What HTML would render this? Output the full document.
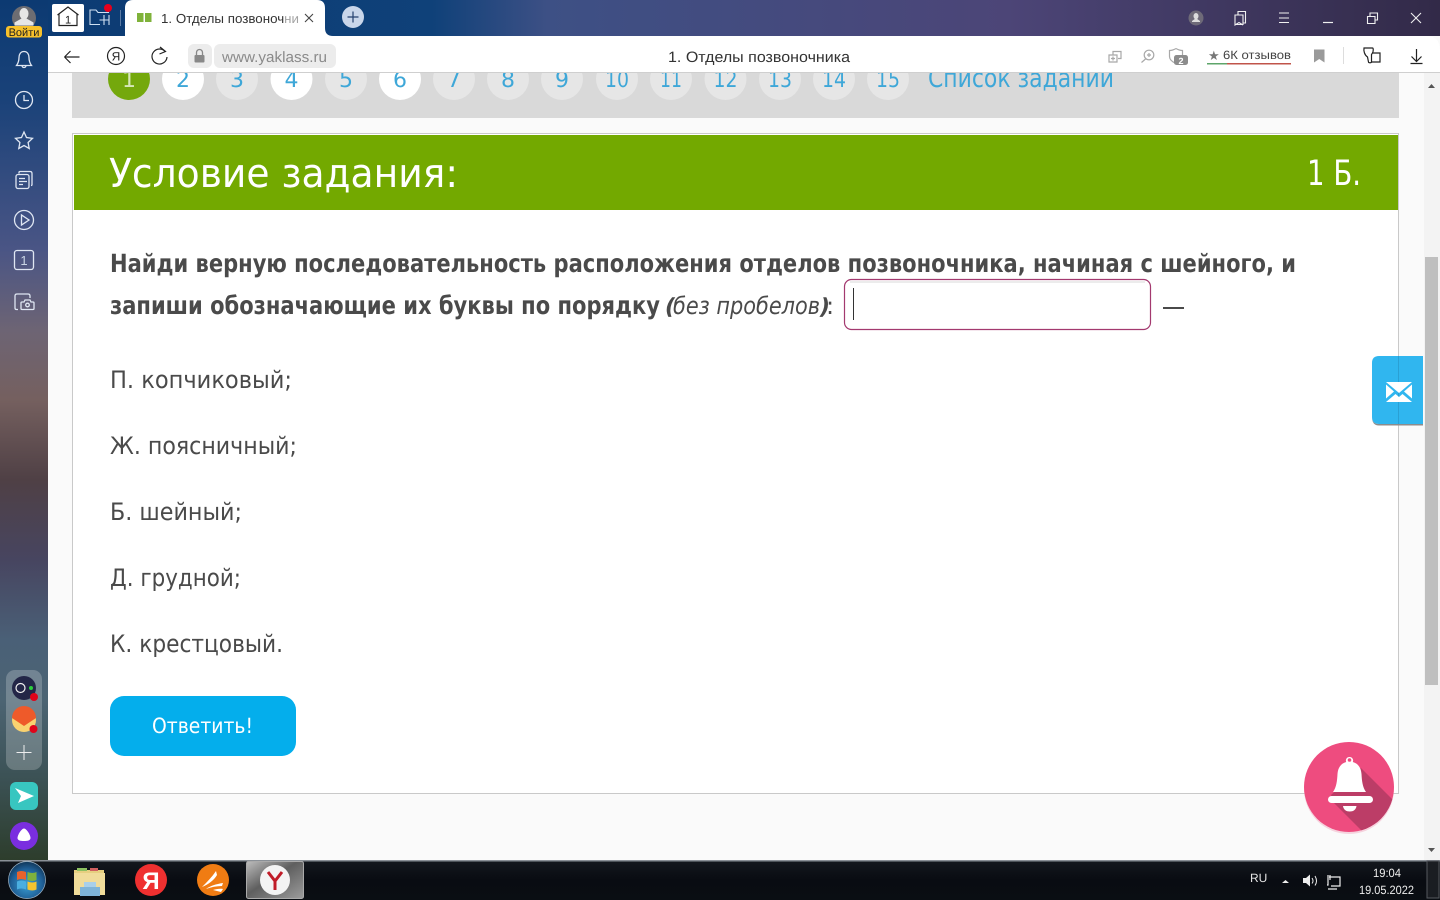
<!DOCTYPE html>
<html lang="ru"><head><meta charset="utf-8"><title>1. Отделы позвоночника</title>
<style>html,body{margin:0;padding:0;width:1440px;height:900px;overflow:hidden;background:#fff}svg{display:block}
text{font-family:"DejaVu Sans","Liberation Sans",sans-serif;text-rendering:geometricPrecision}
.l text,text.l{font-family:"Liberation Sans",sans-serif}
.ic *{fill:none;stroke:#dfe6f2;stroke-width:1.3}
.gi *{fill:none;stroke:#a8a8a8;stroke-width:1.2}
.num circle{fill:#e6e6e6}
.num text{fill:#3ea7d8;font-size:22px;text-anchor:middle}
</style></head><body>
<svg width="1440" height="900" viewBox="0 0 1440 900" xmlns="http://www.w3.org/2000/svg">
<defs>
<linearGradient id="top" x1="0" x2="1" y1="0" y2="0"><stop offset="0" stop-color="#0c3a72"/><stop offset=".3" stop-color="#0f4179"/><stop offset=".38" stop-color="#3d5085"/><stop offset=".7" stop-color="#4c4577"/><stop offset="1" stop-color="#322a48"/></linearGradient>
<linearGradient id="side" gradientUnits="userSpaceOnUse" x1="0" x2="0" y1="0" y2="860"><stop offset="0" stop-color="#0c3a72"/><stop offset=".116" stop-color="#1a4279"/><stop offset=".29" stop-color="#4a5585"/><stop offset=".384" stop-color="#6d6474"/><stop offset=".465" stop-color="#75605f"/><stop offset=".558" stop-color="#4f4045"/><stop offset=".651" stop-color="#474560"/><stop offset=".744" stop-color="#4a6077"/><stop offset=".814" stop-color="#4c6473"/><stop offset=".907" stop-color="#3b5154"/><stop offset="1" stop-color="#2d3d2c"/></linearGradient>
<linearGradient id="task" x1="0" x2="0" y1="0" y2="1"><stop offset="0" stop-color="#14181e"/><stop offset=".5" stop-color="#090c12"/><stop offset="1" stop-color="#0a0e13"/></linearGradient>
<linearGradient id="ybtn" x1="0" x2="1" y1="0" y2="1"><stop offset="0" stop-color="#bdbdbd"/><stop offset=".45" stop-color="#5f5f5f"/><stop offset="1" stop-color="#9c9c9c"/></linearGradient>
<radialGradient id="win" cx=".5" cy=".62" r=".6"><stop offset="0" stop-color="#3aa0d6"/><stop offset=".7" stop-color="#1f5f96"/><stop offset="1" stop-color="#123a5e"/></radialGradient>
<clipPath id="bell"><circle cx="1349" cy="787" r="45"/></clipPath>
</defs>

<rect width="1440" height="860" fill="url(#top)"/>
<rect x="0" y="0" width="48" height="860" fill="url(#side)"/>

<!-- content bg -->
<rect x="48" y="36" width="1392" height="824" fill="#fafafa"/>
<rect x="1424" y="72" width="16" height="788" fill="#f3f3f3"/>
<rect x="1425" y="257" width="13" height="428" fill="#bfbfbf"/>
<path d="M1428 88l3.5-4 3.500 4z" fill="#555"/><path d="M1428 848l3.500 4 3.500-4z" fill="#555"/>

<!-- gray nav -->
<rect x="72" y="60" width="1327" height="58" fill="#d9d9d9"/>
<g class="num">
<circle cx="129" cy="79" r="21" style="fill:#74a80c"/><text x="129" y="87" style="fill:#d7e8b8">1</text>
<circle cx="183" cy="79" r="21" style="fill:#fff"/><text x="183" y="87">2</text>
<circle cx="237" cy="79" r="21"/><text x="237" y="87">3</text>
<circle cx="291.500" cy="79" r="21" style="fill:#fff"/><text x="291.500" y="87">4</text>
<circle cx="346" cy="79" r="21"/><text x="346" y="87">5</text>
<circle cx="400" cy="79" r="21" style="fill:#fff"/><text x="400" y="87">6</text>
<circle cx="454" cy="79" r="21"/><text x="454" y="87">7</text>
<circle cx="508" cy="79" r="21"/><text x="508" y="87">8</text>
<circle cx="562" cy="79" r="21"/><text x="562" y="87">9</text>
<circle cx="617" cy="79" r="21"/><text x="617" y="87" textLength="24" lengthAdjust="spacingAndGlyphs">10</text>
<circle cx="671" cy="79" r="21"/><text x="671" y="87" textLength="22" lengthAdjust="spacingAndGlyphs">11</text>
<circle cx="725.500" cy="79" r="21"/><text x="725.500" y="87" textLength="24" lengthAdjust="spacingAndGlyphs">12</text>
<circle cx="780" cy="79" r="21"/><text x="780" y="87" textLength="24" lengthAdjust="spacingAndGlyphs">13</text>
<circle cx="834" cy="79" r="21"/><text x="834" y="87" textLength="24" lengthAdjust="spacingAndGlyphs">14</text>
<circle cx="888" cy="79" r="21"/><text x="888" y="87" textLength="24" lengthAdjust="spacingAndGlyphs">15</text>
</g>
<text x="928" y="87" font-size="26" fill="#3ea7d8" textLength="186" lengthAdjust="spacingAndGlyphs">Список заданий</text>

<!-- card -->
<rect x="72.500" y="133.500" width="1326" height="660" fill="#fff" stroke="#c9c9c9"/>
<rect x="74" y="135" width="1324" height="75" fill="#73a900"/>
<text x="109" y="187" font-size="40" fill="#fff" textLength="349" lengthAdjust="spacingAndGlyphs">Условие задания:</text>
<text x="1307" y="185" font-size="35" fill="#fff" textLength="54" lengthAdjust="spacingAndGlyphs">1 Б.</text>

<text x="110" y="272" font-size="25" font-weight="700" fill="#4a4a4a" textLength="1186" lengthAdjust="spacingAndGlyphs">Найди верную последовательность расположения отделов позвоночника, начиная с шейного, и</text>
<text x="110" y="314" font-size="25" font-weight="700" fill="#4a4a4a" textLength="550" lengthAdjust="spacingAndGlyphs">запиши обозначающие их буквы по порядку</text>
<text x="665" y="314" font-size="22" font-weight="700" font-style="italic" fill="#4a4a4a">(</text>
<text x="673" y="314" font-size="24" font-style="italic" fill="#4a4a4a" textLength="147" lengthAdjust="spacingAndGlyphs">без пробелов</text>
<text x="820" y="314" font-size="22" font-weight="700" font-style="italic" fill="#4a4a4a">)</text>
<text x="826" y="314" font-size="24" fill="#4a4a4a">:</text>
<rect x="844.500" y="279.500" width="306" height="50" rx="7" fill="#fff" stroke="#a3396f" stroke-width="1.200"/>
<rect x="850" y="281" width="295" height="2" fill="#ececec"/>
<rect x="853" y="288" width="1" height="32" fill="#333"/>
<rect x="1163" y="307" width="21" height="2" fill="#4a4a4a"/>

<g font-size="24" fill="#4a4a4a">
<text x="110" y="388" textLength="182" lengthAdjust="spacingAndGlyphs">П. копчиковый;</text>
<text x="110" y="454" textLength="187" lengthAdjust="spacingAndGlyphs">Ж. поясничный;</text>
<text x="110" y="520" textLength="132" lengthAdjust="spacingAndGlyphs">Б. шейный;</text>
<text x="110" y="586" textLength="131" lengthAdjust="spacingAndGlyphs">Д. грудной;</text>
<text x="110" y="652" textLength="173" lengthAdjust="spacingAndGlyphs">К. крестцовый.</text>
</g>
<rect x="110" y="696" width="186" height="60" rx="14" fill="#04aeec"/>
<text x="152" y="733" font-size="21" fill="#fff" textLength="101" lengthAdjust="spacingAndGlyphs">Ответить!</text>

<!-- mail tab -->
<path d="M1379 356h44v68h-44q-7 0-7-7v-54q0-7 7-7z" fill="#30b6ef"/>
<path d="M1372 417q0 7 7 7h44v1.500h-44q-7 0-7-8.500z" fill="#8c8c8c"/>
<rect x="1398" y="356" width="1" height="68" fill="#2aa0d4"/>
<path d="M1386 382h26l-13 11z M1386 384.500v14l8-7z M1412 384.500v14l-8-7z M1386 402l9.500-8 3.500 3 3.500-3 9.500 8z" fill="#fff"/>

<!-- bell -->
<circle cx="1349" cy="789" r="45" fill="#f4b9cb" opacity=".6"/>
<circle cx="1349" cy="787" r="45" fill="#ee4c7f"/>
<path d="M1361 768l40 40-30 32-37-37 -3-8z" fill="#bc3d67" clip-path="url(#bell)"/>
<path d="M1349.500 757a3.500 3.500 0 0 1 3.300 5c5.500 1.500 8.300 6 8.700 12 .4 7 1 13 4.500 18h-33c3.500-5 4.100-11 4.500-18 .4-6 3.200-10.500 8.700-12a3.500 3.500 0 0 1 3.300-5z" fill="#fff"/>
<circle cx="1349.500" cy="760" r="1.800" fill="#ee4c7f"/>
<rect x="1328" y="796" width="45" height="7" rx="3.500" fill="#fff"/>
<path d="M1343 806h13.500c-.5 4-3.500 5.500-6.750 5.500s-6.250-1.500-6.750-5.500z" fill="#fff"/>

<!-- browser toolbar -->
<path d="M48 36H1426q14 0 14 14v22H48z" fill="#fff"/>
<rect x="48" y="72" width="1392" height="1" fill="#cfcfcf"/>
<path d="M125 36v-28q0-8 8-8h184q8 0 8 8v20q0 8 8 8z" fill="#fff"/>
<text x="161" y="23" class="l" font-size="13" fill="#333" textLength="138" lengthAdjust="spacingAndGlyphs">1. Отделы позвоночни</text>
<rect x="284" y="8" width="16" height="20" fill="#fff" opacity=".55"/>
<path d="M137 13h6.500v9h-6.500zM145 13h6.500v9h-6.500z" fill="#7fb23a"/>
<path d="M305 14l8 8M313 14l-8 8" stroke="#444" stroke-width="1.100" fill="none"/>
<circle cx="353" cy="17" r="11" fill="#c9d6ea"/><path d="M353 11.500v11M347.500 17h11" stroke="#24406e" stroke-width="1.200"/>

<!-- home, tabs -->
<rect x="52" y="4" width="32" height="28" rx="2" fill="#fff"/>
<path d="M57.500 15l10.500-8 10.500 8M59 14v11.500h18V14" fill="none" stroke="#222" stroke-width="1.200"/>
<text x="68" y="23.500" class="l" font-size="11" fill="#222" text-anchor="middle">1</text>
<path d="M100 24.500H90V10h6l2 2.500h11M104 15v10M109 15v10M99.500 20h9.500" fill="none" stroke="#cfe0f2" stroke-width="1.100"/>
<circle cx="108" cy="8" r="4" fill="#e8001c"/>
<rect x="120" y="10" width="1" height="16" fill="#5b7ba5"/>

<!-- window controls -->
<circle cx="1196" cy="18" r="7.500" fill="#6e6a78"/><path d="M1196 13a2.500 3 0 0 1 2.500 3c0 1.500-.8 2.500-1.300 3l2.800 2v1h-8v-1l2.800-2c-.5-.5-1.300-1.500-1.300-3a2.500 3 0 0 1 2.500-3z" fill="#ddd"/>
<path d="M1235 15h8v9.500l-4-0 -4 0zM1235 24.500l0 0M1235 15v10l4-2.500 4 2.500M1238 15v-3.500h7.500v11.500h-2.500" fill="none" stroke="#f0f0f0" stroke-width="1.100"/>
<path d="M1279 13h10M1279 18h10M1279 22.500h10" stroke="#f0f0f0" stroke-width="1.100"/>
<path d="M1323 22.500h10" stroke="#f0f0f0" stroke-width="1.200"/>
<path d="M1367.500 16.500h7.500v7h-7.500zM1370 16v-3h7.500v7h-2.500" fill="none" stroke="#f0f0f0" stroke-width="1.100"/>
<path d="M1411 13l10 10M1421 13l-10 10" stroke="#f0f0f0" stroke-width="1.100"/>

<!-- address bar left -->
<path d="M64.500 57h15M64.500 57l6-6M64.500 57l6 6" stroke="#222" stroke-width="1.200" fill="none"/>
<circle cx="116" cy="56" r="8.500" fill="none" stroke="#222" stroke-width="1.200"/>
<text x="116" y="60.500" class="l" font-size="12" fill="#222" text-anchor="middle">Я</text>
<path d="M165.500 52a7.500 7.500 0 1 0 1.500 5M160 47l5.500 4.500-6 2.500" fill="none" stroke="#222" stroke-width="1.200"/>
<rect x="188" y="44" width="24" height="24" rx="6" fill="#ececec"/>
<rect x="194.500" y="55" width="10" height="7.500" rx="1" fill="#888"/><path d="M196.500 55v-2.500a3 3 0 0 1 6 0V55" fill="none" stroke="#888" stroke-width="1.300"/>
<rect x="214" y="44" width="122" height="24" rx="6" fill="#ececec"/>
<text x="222" y="62" class="l" font-size="15" fill="#8a8a8a" textLength="105" lengthAdjust="spacingAndGlyphs">www.yaklass.ru</text>
<text x="668" y="62" class="l" font-size="15" fill="#333" textLength="182" lengthAdjust="spacingAndGlyphs">1. Отделы позвоночника</text>

<!-- address bar right -->
<g class="gi">
<path d="M1109 55h8v7h-8zM1113 55v-3.500h8v7h-3M1111 58.500h4M1113 56.500v4"/>
<circle cx="1149" cy="55" r="4.800"/><path d="M1145.500 59l-4 3.500M1147 55h4M1149 53v4"/>
<path d="M1176 48.500c3 1.800 5 2 6.500 2v5M1176 48.500c-3 1.800-5 2-6.500 2v6c0 3 3 5.500 6.500 7"/>
</g>
<rect x="1174" y="55" width="14" height="10" rx="2.500" fill="#8c8c8c"/>
<text x="1181" y="64" class="l" font-size="9" font-weight="700" fill="#fff" text-anchor="middle">2</text>
<text x="1208" y="60" font-size="13" fill="#777">★</text>
<text x="1223" y="59" class="l" font-size="12" fill="#444" textLength="68" lengthAdjust="spacingAndGlyphs">6К отзывов</text>
<rect x="1207" y="63" width="20" height="1.500" fill="#5ea56a"/><rect x="1227" y="63" width="64" height="1.500" fill="#c0544a"/>
<path d="M1314 49.500h10.500v13l-5.250-3.500-5.250 3.500z" fill="#9a9a9a"/>
<rect x="1343" y="47" width="1" height="17" fill="#ddd"/>
<path d="M1364 48h8.500c1 0 1 3 0 5l-1 1.500v7.500c0 1-3 1-3 0l-1-5c-3-2-4-6-3.500-9zM1372 53h8v9h-9" fill="none" stroke="#222" stroke-width="1.200"/>
<path d="M1416.500 49v12M1411.500 56.500l5 5 5-5M1410.500 63.500h12" fill="none" stroke="#222" stroke-width="1.200"/>

<!-- sidebar top -->
<circle cx="24" cy="18" r="12" fill="#6d6d72"/>
<path d="M24 8a4.500 5.500 0 0 1 4.500 5.500c0 2.500-1 4-2 5l7 4v3H14.500v-3l7-4c-1-1-2-2.500-2-5A4.500 5.500 0 0 1 24 8z" fill="#e6e6e6"/>
<rect x="6" y="26" width="36" height="11.500" rx="3" fill="#f7c12b"/>
<text x="24" y="36" class="l" font-size="11" fill="#222" text-anchor="middle">Войти</text>

<g class="ic">
<path d="M24 51.500c-3.500 0-5 3-5 6 0 3-.7 5.500-2.500 8h15c-1.800-2.500-2.500-5-2.500-8 0-3-1.500-6-5-6zM22 65.500c0 2.700 4 2.700 4 0"/>
<circle cx="24" cy="100" r="8.500"/><path d="M24 95v5.500h5"/>
<path d="M24 132l2.500 5.500 6 .8-4.400 4.200 1.100 6-5.200-3-5.200 3 1.100-6-4.400-4.200 6-.8z"/>
<rect x="16" y="174.500" width="13" height="14" rx="2"/><path d="M19 173.500v-1q0-1 1-1h10q2 0 2 2v11q0 1-1 1M19 178.500h6M19 181.500h8M19 184.500h4"/>
<circle cx="24" cy="220" r="9.500"/><path d="M21.500 215v10l7.500-5z"/>
<rect x="14.500" y="250.500" width="19" height="19" rx="2.500"/>
<path d="M18 309.500h-1.500q-1.500 0-1.500-1.500v-12q0-2 2-2h11q2 0 2 2v2M22 302h2l1-2h5l1 2h2q1 0 1 1v5.500q0 1-1 1H22q-1 0-1-1v-5.500q0-1 1-1z"/><circle cx="27.500" cy="305" r="1.800"/>
</g>
<text x="24" y="265" class="l" font-size="13" fill="#c9d4e4" text-anchor="middle">1</text>

<!-- sidebar bottom -->
<rect x="6" y="670" width="36" height="100" rx="9" fill="#fff" opacity=".22"/>
<circle cx="24" cy="688" r="12" fill="#232647"/><circle cx="20.500" cy="688" r="4.500" fill="none" stroke="#f0f0f0" stroke-width="1.200"/><circle cx="31" cy="688" r="2" fill="#2bcf3c"/><circle cx="34" cy="697" r="4" fill="#e0041a"/>
<circle cx="24" cy="720" r="12" fill="#f9d270"/><path d="M12 718a12 12 0 0 1 24 0l-12 8z" fill="#ee5a2a"/><circle cx="33.500" cy="729" r="4" fill="#e0041a"/>
<path d="M24 745v15M16.500 752.500h15" stroke="#eee" stroke-width="1"/>
<rect x="10" y="782" width="28" height="28" rx="6" fill="#38c6c0"/><path d="M15 788l19 8-16 7 3-7z" fill="#fff"/>
<circle cx="24" cy="836" r="14" fill="#7a2ee0"/><path d="M24 828.500c2.500 0 6.500 6.500 6.500 9.500 0 2.500-3 3-6.500 3s-6.500-.5-6.500-3c0-3 4-9.500 6.500-9.500z" fill="#fff"/>

<!-- taskbar -->
<rect x="0" y="860" width="1440" height="40" fill="url(#task)"/>
<rect x="0" y="860" width="1440" height="1.500" fill="#8a9097"/>
<circle cx="27" cy="880" r="18.500" fill="url(#win)" stroke="#9fb6c8" stroke-width=".7"/>
<path d="M17 872q4-2 9 0v8q-5-2-9 0z" fill="#e8622c"/><path d="M27.500 872q5 2 9 0v8q-4 2-9 0z" fill="#7eb13e"/><path d="M17 881.500q4-2 9 0v8q-5-2-9 0z" fill="#4aaee0"/><path d="M27.500 881.500q5 2 9 0v8q-4 2-9 0z" fill="#f4c430"/>
<path d="M74 870h30v4H74z" fill="#e6cf80"/><path d="M74 873h31v22H74z" fill="#f0dc9a"/><path d="M77 868h10v3H77z" fill="#8cc060"/><path d="M90 868h8v3h-8z" fill="#d06060"/><rect x="80" y="887" width="20" height="9" fill="#7fb4d8"/><rect x="84" y="882" width="12" height="5" fill="#a9d0ea"/>
<circle cx="151" cy="880" r="16" fill="#ef3030"/><text x="151" y="889" class="l" font-size="24" font-weight="700" fill="#fff" text-anchor="middle">Я</text>
<circle cx="213" cy="880" r="16" fill="#f07c13"/><path d="M202 887c5-5 10-10 14-16l1 4c-3 5-8 9-15 12zM206 889c4-3 10-5 17-6l-1 3c-5 0-11 1-16 3zM213 890c3-1 7-1.500 10-1l-2 3z" fill="#fff"/>
<rect x="246.500" y="861.500" width="57" height="37" rx="2" fill="url(#ybtn)" stroke="#aaa"/>
<circle cx="275" cy="880" r="15" fill="#f3f3f3"/><path d="M268 872l7 9 7-9M275 881v9" fill="none" stroke="#c01c28" stroke-width="3"/>

<text x="1250" y="882" class="l" font-size="12" fill="#e4e4e4">RU</text>
<path d="M1282 883l3.500-3 3.500 3z" fill="#eee"/>
<path d="M1303 878h3l4-3.500v12l-4-3.500h-3z" fill="#eee"/><path d="M1312 878q2 3 0 5.500M1315 876q3 5 0 9.500" fill="none" stroke="#eee"/>
<path d="M1329 877h11v9h-9M1328 875v10h-1M1330 875v5M1328 889h9" fill="none" stroke="#eee" stroke-width="1.200"/>
<text x="1387" y="877" class="l" font-size="12" fill="#eee" text-anchor="middle" textLength="28" lengthAdjust="spacingAndGlyphs">19:04</text>
<text x="1386.500" y="894" class="l" font-size="12" fill="#eee" text-anchor="middle" textLength="55" lengthAdjust="spacingAndGlyphs">19.05.2022</text>
<rect x="1427" y="861" width="12" height="37" fill="#1a1d22" stroke="#55595f"/>
</svg>
</body></html>
